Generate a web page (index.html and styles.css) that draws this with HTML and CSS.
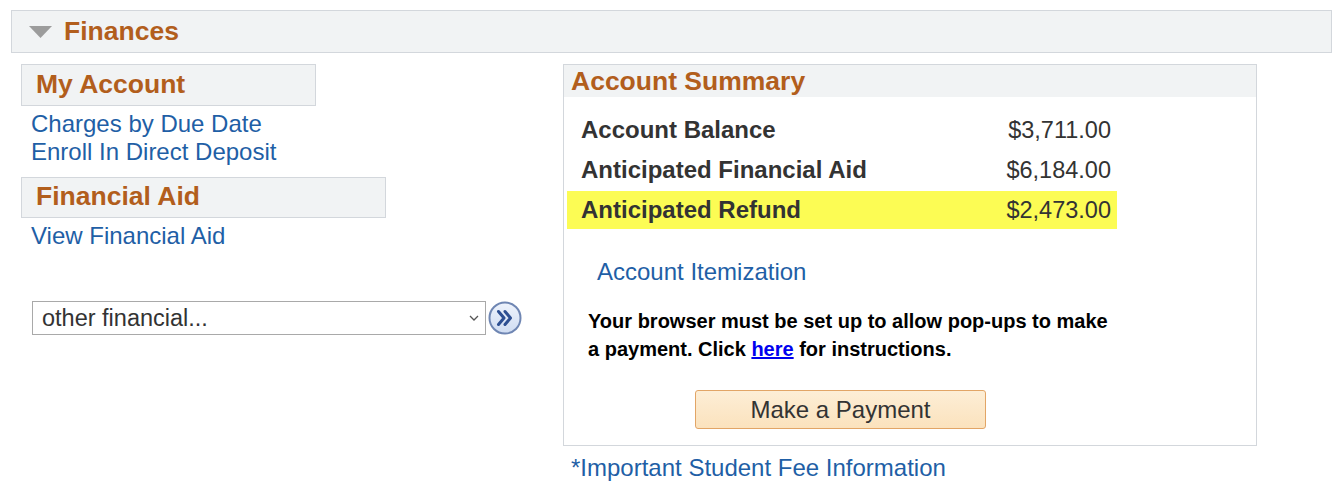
FILE: index.html
```html
<!DOCTYPE html>
<html lang="en">
<head>
    <meta charset="UTF-8">
    <title>Finances</title>
    <link rel="stylesheet" href="styles.css">
</head>
<body>
    <div class="section-head">
        <svg class="toggle" width="23" height="12" viewBox="0 0 23 12"><polygon points="0,0 23,0 11.5,12" fill="#9c9c9c"/></svg>
        <span class="section-title">Finances</span>
    </div>

    <div class="main">
        <div class="left-col">
            <div class="group-head">My Account</div>
            <ul class="links">
                <li><a href="#">Charges by Due Date</a></li>
                <li><a href="#">Enroll In Direct Deposit</a></li>
            </ul>
            <div class="group-head wide">Financial Aid</div>
            <ul class="links">
                <li><a href="#">View Financial Aid</a></li>
            </ul>
            <div class="other-row">
                <select class="other-select">
                    <option>other financial...</option>
                </select>
                <button class="go-btn" type="button" aria-label="Go">
                    <svg width="34" height="34" viewBox="0 0 34 34">
                        <defs>
                            <linearGradient id="gb" x1="0" y1="0" x2="0" y2="1">
                                <stop offset="0" stop-color="#eef3fc"/>
                                <stop offset="1" stop-color="#cfdcf2"/>
                            </linearGradient>
                        </defs>
                        <circle cx="17" cy="17" r="15.5" fill="url(#gb)" stroke="#6f86b3" stroke-width="2"/>
                        <path d="M10.5 10.5 L16 17 L10.5 23.5 M17 10.5 L22.5 17 L17 23.5" fill="none" stroke="#2d4f92" stroke-width="3" stroke-linecap="round" stroke-linejoin="round"/>
                    </svg>
                </button>
            </div>
        </div>

        <div class="right-col">
            <div class="summary">
                <div class="summary-head">Account Summary</div>
                <table class="summary-table">
                    <tr>
                        <td class="label">Account Balance</td>
                        <td class="amount">$3,711.00</td>
                    </tr>
                    <tr>
                        <td class="label">Anticipated Financial Aid</td>
                        <td class="amount">$6,184.00</td>
                    </tr>
                    <tr class="highlight">
                        <td class="label">Anticipated Refund</td>
                        <td class="amount">$2,473.00</td>
                    </tr>
                </table>
                <a class="itemization" href="#">Account Itemization</a>
                <p class="popup-note">Your browser must be set up to allow pop-ups to make<br>a payment. Click <a href="#">here</a> for instructions.</p>
                <button class="pay-btn" type="button">Make a Payment</button>
            </div>
            <a class="fee-info" href="#">*Important Student Fee Information</a>
        </div>
    </div>
</body>
</html>
```
FILE: styles.css
```css
body {
    margin: 0;
    padding: 10px 7px 0 11px;
    font-family: "Liberation Sans", Arial, sans-serif;
    font-size: 24px;
    color: #333;
    background: #fff;
}
a {
    color: #1f5fa6;
    text-decoration: none;
}
.section-head {
    display: flex;
    align-items: center;
    height: 43px;
    box-sizing: border-box;
    border: 1px solid #d3d7dc;
    background: #f1f3f4;
    padding-left: 17px;
}
.toggle {
    margin-right: 12px;
    margin-top: 1px;
}
.section-title {
    font-size: 26.5px;
    font-weight: bold;
    color: #b25e1c;
}
.main {
    display: flex;
    margin-top: 11px;
    padding-left: 10px;
}
.left-col {
    width: 542px;
}
.group-head {
    width: 295px;
    height: 42px;
    box-sizing: border-box;
    border: 1px solid #d3d7dc;
    background: #f1f3f4;
    padding-left: 14px;
    font-size: 26.5px;
    font-weight: bold;
    color: #b25e1c;
    line-height: 38px;
}
.group-head.wide {
    width: 365px;
    height: 41px;
    line-height: 37px;
}
.links {
    list-style: none;
    margin: 4px 0 11px;
    padding: 0 0 0 10px;
    line-height: 28px;
}
.other-row {
    display: flex;
    align-items: center;
    gap: 2px;
    margin-top: 51px;
    padding-left: 11px;
}
.other-select {
    appearance: none;
    width: 454px;
    height: 34px;
    font-family: "Liberation Sans", Arial, sans-serif;
    font-size: 23.5px;
    color: #333;
    border: 1px solid #a9a9a9;
    border-radius: 0;
    background: #fff url("data:image/svg+xml,%3Csvg xmlns='http://www.w3.org/2000/svg' width='10' height='6' viewBox='0 0 10 6'%3E%3Cpath d='M1 1 L5 5 L9 1' fill='none' stroke='%23555' stroke-width='1.3'/%3E%3C/svg%3E") no-repeat right 6px center;
    padding: 0 4px 0 9px;
}
.go-btn {
    border: none;
    background: none;
    padding: 0;
    width: 34px;
    height: 34px;
}
.right-col {
    width: 694px;
}
.summary {
    border: 1px solid #d3d7dc;
    height: 382px;
    box-sizing: border-box;
}
.summary-head {
    height: 32px;
    background: #f1f3f4;
    padding-left: 7px;
    font-size: 26.5px;
    font-weight: bold;
    color: #b25e1c;
    line-height: 32px;
}
.summary-table {
    margin: 12px 0 0 3px;
    border-collapse: separate;
    border-spacing: 0 2px;
    width: 550px;
}
.summary-table td {
    height: 38px;
    padding: 0;
}
.summary-table .label {
    padding-left: 14px;
    font-size: 24px;
    font-weight: bold;
}
.summary-table .amount {
    text-align: right;
    padding-right: 6px;
    font-size: 23.5px;
}
.summary-table .highlight td {
    background: #fcfc54;
}
.itemization {
    display: block;
    margin: 27px 0 0 33px;
    line-height: 28px;
}
.popup-note {
    margin: 21px 0 0 24px;
    font-size: 20px;
    font-weight: bold;
    color: #000;
    line-height: 28px;
}
.popup-note a {
    color: #0000ee;
    text-decoration: underline;
}
.pay-btn {
    display: block;
    margin: 27px 0 0 131px;
    width: 291px;
    height: 39px;
    border: 1px solid #e2a566;
    border-radius: 3px;
    background: linear-gradient(#fdeed6, #fbe2bd);
    font-family: "Liberation Sans", Arial, sans-serif;
    font-size: 24px;
    color: #333;
    padding: 0;
}
.fee-info {
    display: block;
    margin: 8px 0 0 8px;
    line-height: 28px;
}
```
